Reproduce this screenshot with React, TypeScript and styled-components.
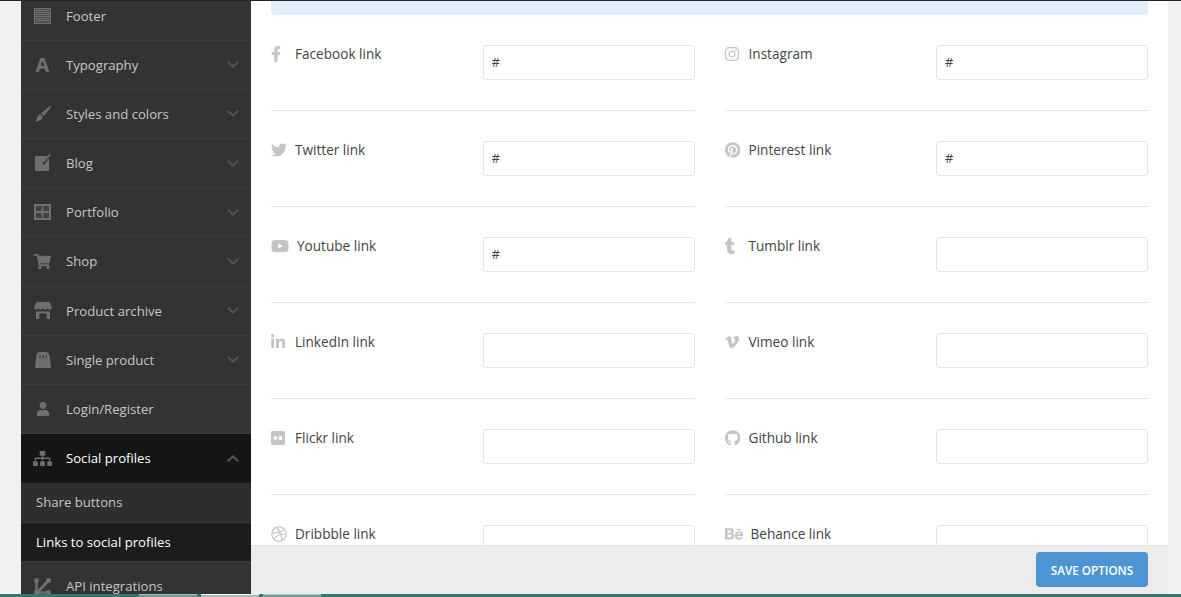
import React from "react";
import styled, { createGlobalStyle } from "styled-components";
import {
  FaBehance,
  FaDribbble,
  FaFacebookF,
  FaFlickr,
  FaGithub,
  FaInstagram,
  FaLinkedinIn,
  FaPinterest,
  FaShoppingCart,
  FaSitemap,
  FaTumblr,
  FaTwitter,
  FaUser,
  FaVimeoV,
  FaYoutube,
} from "react-icons/fa";

const GlobalStyle = createGlobalStyle`
  html, body {
    margin: 0;
    height: 100%;
    overflow: hidden;
    background: #f1f1f1;
    font-family: "Open Sans", "Liberation Sans", sans-serif;
  }
  * { box-sizing: border-box; }
`;

const Shell = styled.div`
  height: 597px;
  display: flex;
  flex-direction: column;
  border-top: 1px solid #1d2327;
`;

const Workspace = styled.div`
  flex: 1;
  min-height: 0;
  display: flex;
  padding: 0 13px 0 21px;
  overflow: hidden;
`;

const Taskbar = styled.div`
  height: 3px;
  flex: none;
  display: flex;
  gap: 4px;
  padding-left: 139px;
  background: #38766a;
`;

const TaskTab = styled.span<{ $current?: boolean }>`
  width: 58px;
  background: ${(p) => (p.$current ? "#9fc0b8" : "#6f9c92")};
  border-top: 1px solid ${(p) => (p.$current ? "#f4f4f4" : "#a5c2bb")};
`;

const Sidebar = styled.nav`
  width: 230px;
  flex: none;
  background: #333;
  overflow: hidden;
`;

const SidebarList = styled.div`
  margin-top: -9.6px;
`;

const MenuRow = styled.div<{ $active?: boolean }>`
  height: ${(p) => (p.$active ? "49px" : "49.2px")};
  display: flex;
  align-items: center;
  padding: 0 12px 0 11px;
  font-size: 13.15px;
  color: ${(p) => (p.$active ? "#fff" : "#c6c6c6")};
  background: ${(p) => (p.$active ? "#151515" : "transparent")};
  border-bottom: 1px solid ${(p) => (p.$active ? "#1d1d1d" : "#3d3d3d")};
`;

const MenuIcon = styled.span`
  width: 21px;
  margin-right: 13px;
  flex: none;
  display: flex;
  justify-content: center;
  align-items: center;
  font-size: 20px;
  font-weight: 700;
  line-height: 1;
  color: #6f6f6f;
`;

const MenuLabel = styled.span`
  flex: 1;
`;

const Caret = styled.svg`
  width: 12px;
  height: 7px;
  fill: none;
  stroke: #525252;
  stroke-width: 2;
`;

const SubRow = styled.div<{ $active?: boolean }>`
  height: 39.5px;
  display: flex;
  align-items: center;
  padding-left: 15px;
  font-size: 13.15px;
  color: ${(p) => (p.$active ? "#fff" : "#c6c6c6")};
  background: ${(p) => (p.$active ? "#1c1c1c" : "#2e2e2e")};
  border-bottom: 1px solid #3a3a3a;
`;

const Main = styled.main`
  flex: 1;
  min-width: 0;
  display: flex;
  flex-direction: column;
  background: #fff;
`;

const Scroller = styled.div`
  flex: 1;
  min-height: 0;
  overflow: hidden;
  padding: 0 20px;
`;

const Notice = styled.div`
  height: 14px;
  background: #e3eff8;
  border-radius: 0 0 4px 4px;
`;

const FieldGrid = styled.div`
  display: grid;
  grid-template-columns: 1fr 1fr;
  column-gap: 30px;
`;

const FieldRow = styled.div`
  height: 96px;
  padding-top: 30px;
  display: flex;
  justify-content: space-between;
  align-items: flex-start;
  border-bottom: 1px solid #e6e6e6;
`;

const FieldLabel = styled.label`
  display: flex;
  align-items: center;
  height: 18px;
  font-size: 13.6px;
  font-weight: 500;
  color: #444;
`;

const FieldText = styled.span`
  margin-bottom: 2px;
`;

const FieldIcon = styled.span<{ $width: number }>`
  display: flex;
  min-width: 16px;
  margin-right: 8px;
  color: #c4c4c4;

  svg {
    height: 16px;
    width: ${(p) => p.$width}px;
  }
`;

const FieldInput = styled.input`
  width: 212px;
  height: 35px;
  flex: none;
  padding: 0 8px 1px;
  border: 1px solid #e4e4e4;
  border-radius: 3px;
  outline: none;
  background: #fff;
  font-family: "Open Sans", "Liberation Sans", sans-serif;
  font-size: 13px;
  color: #444;
`;

const SaveBar = styled.div`
  height: 49px;
  flex: none;
  display: flex;
  align-items: flex-start;
  justify-content: flex-end;
  padding: 6px 20px 0;
  background: #ececec;
  border-top: 1px solid #e3e3e3;
`;

const SaveButton = styled.button`
  width: 112px;
  height: 35px;
  border: 0;
  border-radius: 4px;
  background: #4d94d2;
  color: #fff;
  font-family: "Open Sans", "Liberation Sans", sans-serif;
  font-size: 11.7px;
  font-weight: 600;
  cursor: pointer;
`;

const ChevronDown = () => (
  <Caret viewBox="0 0 12 7">
    <path d="M.7.7 6 5.6 11.3.7" />
  </Caret>
);

const ChevronUp = () => (
  <Caret viewBox="0 0 12 7">
    <path d="M.7 6.3 6 1.4l5.3 4.9" />
  </Caret>
);

// the sidebar glyphs below have no close match in the icon packages
const FooterGlyph = () => (
  <svg width="17" height="16" viewBox="0 0 17 16" fill="currentColor">
    <path d="M0 0h17v16H0z" opacity=".45" />
    <path d="M0 0h17v1H0zM0 6h17v1H0zM0 8h17v1H0zM0 15h17v1H0zM0 0h1v16H0zM16 0h1v16h-1z" />
    <path d="M2 2h13v1H2zM2 4h13v1H2zM2 10h13v1H2zM2 12h13v1H2z" />
  </svg>
);

const BrushGlyph = () => (
  <svg width="16" height="16" viewBox="0 0 16 16" fill="currentColor">
    <path d="M15.6.3c.4.4.4 1 0 1.4L8.6 10 6 7.6 14.1.4c.4-.4 1.1-.5 1.5-.1z" />
    <path d="M5.2 8.4l2.5 2.3c-.4 2.7-2.8 4.6-7.7 4.6 2-1.3 1.6-2.8 2.4-4.6.6-1.3 1.6-2.1 2.8-2.3z" />
  </svg>
);

const BlogGlyph = () => (
  <svg width="16" height="18" viewBox="0 0 16 18" fill="currentColor">
    <path d="M0 2h11.5L8 8.5 7.5 11l2.5-1.5 4-5V17H0z" />
    <path d="M12.8 1.5 14.5 0l1.2 1.2-6 6.4-1.6.5.5-1.6z" />
  </svg>
);

const GridGlyph = () => (
  <svg width="17" height="16" viewBox="0 0 17 16" fill="currentColor">
    <path d="M2 2h5.5v5H2zM9.5 2H15v5H9.5zM2 9h5.5v5H2zM9.5 9H15v5H9.5z" opacity=".25" />
    <path
      fillRule="evenodd"
      d="M0 0h17v16H0zM2 2v5h5.5V2zm7.5 0v5H15V2zM2 9v5h5.5V9zm7.5 0v5H15V9z"
    />
  </svg>
);

const StoreGlyph = () => (
  <svg width="18" height="17" viewBox="0 0 18 17" fill="currentColor">
    <path d="M2.5 0h13L18 5.5a2.25 2.25 0 0 1-4.5 0 2.25 2.25 0 0 1-4.5 0 2.25 2.25 0 0 1-4.5 0 2.25 2.25 0 0 1-4.5 0z" />
    <path d="M2 9.5h14V17h-3.5v-5.5h-7V17H2z" />
  </svg>
);

const BagGlyph = () => (
  <svg width="16" height="16" viewBox="0 0 16 16" fill="currentColor">
    <path
      fillRule="evenodd"
      d="M1.5 3.5C1.8 1 3.5 0 5 0h6c1.5 0 3.2 1 3.5 3.5L16 15c0 .6-.4 1-1 1H1c-.6 0-1-.4-1-1zM4.5 3v3.5h1V3zm3 0v3.5h1V3zm3 0v3.5h1V3z"
    />
  </svg>
);

const ApiGlyph = () => (
  <svg width="17" height="17" viewBox="0 0 17 17" fill="currentColor">
    <circle cx="2.5" cy="2.5" r="2.5" />
    <circle cx="2.5" cy="14.5" r="2.5" />
    <circle cx="14.5" cy="2.5" r="2.5" />
    <circle cx="14.5" cy="14.5" r="2.5" />
    <path d="M1.2 2.5h2.6v12H1.2zM2.5 13.3 13.6 1.6l1.9 1.8L4.4 15.2zM2.5 13.2h12v2.6h-12z" />
  </svg>
);

const menuTop = [
  { label: "Footer", icon: <FooterGlyph />, caret: false },
  { label: "Typography", icon: "A", caret: true },
  { label: "Styles and colors", icon: <BrushGlyph />, caret: true },
  { label: "Blog", icon: <BlogGlyph />, caret: true },
  { label: "Portfolio", icon: <GridGlyph />, caret: true },
  { label: "Shop", icon: <FaShoppingCart size={17} />, caret: true },
  { label: "Product archive", icon: <StoreGlyph />, caret: true },
  { label: "Single product", icon: <BagGlyph />, caret: true },
  { label: "Login/Register", icon: <FaUser size={14} />, caret: false },
];

const fields = [
  { label: "Facebook link", icon: <FaFacebookF />, width: 10, value: "#" },
  { label: "Instagram", icon: <FaInstagram />, width: 14, value: "#" },
  { label: "Twitter link", icon: <FaTwitter />, width: 16, value: "#" },
  { label: "Pinterest link", icon: <FaPinterest />, width: 15.5, value: "#" },
  { label: "Youtube link", icon: <FaYoutube />, width: 18, value: "#" },
  { label: "Tumblr link", icon: <FaTumblr />, width: 10, value: "" },
  { label: "LinkedIn link", icon: <FaLinkedinIn />, width: 14, value: "" },
  { label: "Vimeo link", icon: <FaVimeoV />, width: 14, value: "" },
  { label: "Flickr link", icon: <FaFlickr />, width: 14, value: "" },
  { label: "Github link", icon: <FaGithub />, width: 15.5, value: "" },
  { label: "Dribbble link", icon: <FaDribbble />, width: 16, value: "" },
  { label: "Behance link", icon: <FaBehance />, width: 18, value: "" },
];

export default function App() {
  return (
    <>
      <GlobalStyle />
      <Shell>
        <Workspace>
          <Sidebar>
            <SidebarList>
              {menuTop.map((item) => (
                <MenuRow key={item.label}>
                  <MenuIcon>{item.icon}</MenuIcon>
                  <MenuLabel>{item.label}</MenuLabel>
                  {item.caret && <ChevronDown />}
                </MenuRow>
              ))}
              <MenuRow $active>
                <MenuIcon>
                  <FaSitemap size={19} />
                </MenuIcon>
                <MenuLabel>Social profiles</MenuLabel>
                <ChevronUp />
              </MenuRow>
              <SubRow>Share buttons</SubRow>
              <SubRow $active>Links to social profiles</SubRow>
              <MenuRow>
                <MenuIcon>
                  <ApiGlyph />
                </MenuIcon>
                <MenuLabel>API integrations</MenuLabel>
              </MenuRow>
            </SidebarList>
          </Sidebar>
          <Main>
            <Scroller>
              <Notice />
              <FieldGrid>
                {fields.map((field) => (
                  <FieldRow key={field.label}>
                    <FieldLabel>
                      <FieldIcon $width={field.width}>{field.icon}</FieldIcon>
                      <FieldText>{field.label}</FieldText>
                    </FieldLabel>
                    <FieldInput defaultValue={field.value} />
                  </FieldRow>
                ))}
              </FieldGrid>
            </Scroller>
            <SaveBar>
              <SaveButton>SAVE OPTIONS</SaveButton>
            </SaveBar>
          </Main>
        </Workspace>
        <Taskbar>
          <TaskTab />
          <TaskTab $current />
          <TaskTab />
        </Taskbar>
      </Shell>
    </>
  );
}
